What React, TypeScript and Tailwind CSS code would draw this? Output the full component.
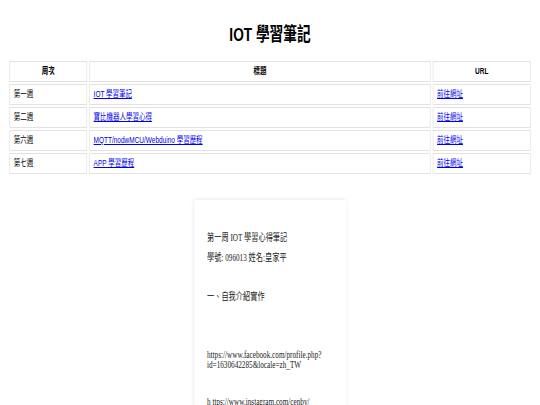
const weeks = [
  { week: '第一週', title: 'IOT 學習筆記' },
  { week: '第二週', title: '寶比機器人學習心得' },
  { week: '第六週', title: 'MQTT/nodwMCU/Webduino 學習歷程' },
  { week: '第七週', title: 'APP 學習歷程' },
];

export default function App() {
  return (
    <div className="w-[540px] h-[405px] overflow-hidden bg-white">
      {/* screenshot is squashed horizontally, so lay out at 750 and compress */}
      <div className="w-[750px] origin-top-left scale-x-[0.72] font-['Liberation_Sans','Noto_Sans_CJK_TC',sans-serif] text-black">
        <h1 className="pt-[23px] text-center text-[19px] leading-[24px] font-bold">IOT 學習筆記</h1>

        <table className="mt-[12px] mx-auto w-[730px] border-separate border-spacing-x-[3px] border-spacing-y-[2px] text-[9px]">
          <thead>
            <tr>
              <th className="w-[108px] h-[21px] p-0 border border-[#e2e2e2] font-bold text-center">周次</th>
              <th className="h-[21px] p-0 border border-[#e2e2e2] font-bold text-center">標題</th>
              <th className="w-[136px] h-[21px] p-0 border border-[#e2e2e2] font-bold text-center">URL</th>
            </tr>
          </thead>
          <tbody>
            {weeks.map((w) => (
              <tr key={w.week}>
                <td className="h-[21px] px-[5px] py-0 border border-[#e2e2e2]">{w.week}</td>
                <td className="h-[21px] px-[5px] py-0 border border-[#e2e2e2]">
                  <a href="#" className="text-[#0000ee] underline">{w.title}</a>
                </td>
                <td className="h-[21px] px-[5px] py-0 border border-[#e2e2e2]">
                  <a href="#" className="text-[#0000ee] underline">前往網址</a>
                </td>
              </tr>
            ))}
          </tbody>
        </table>

        <div className="mt-[24px] mx-auto w-[211px] bg-white shadow-[0_0_5px_rgba(0,0,0,0.12)] pt-[33px] px-[18px] pb-10 font-['Liberation_Serif','Noto_Sans_CJK_TC',serif] text-[10px] leading-[10px] text-[#222]">
          <p>第一周 IOT 學習心得筆記</p>
          <p className="mt-[10px]">學號: 096013 姓名:皇家平</p>
          <p className="mt-[29px]">一、自我介紹實作</p>
          <p className="mt-[48px]">
            https://www.facebook.com/profile.php?
            <br />
            id=1630642285&amp;locale=zh_TW
          </p>
          <p className="mt-[27px]">h ttps://www.instagram.com/cenbv/</p>
        </div>
      </div>
    </div>
  );
}
